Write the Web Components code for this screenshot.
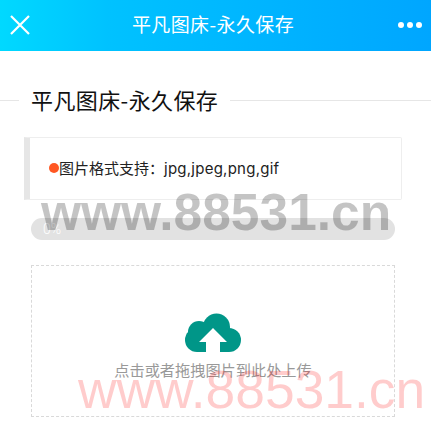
<!DOCTYPE html>
<html lang="zh">
<head>
<meta charset="utf-8">
<title>平凡图床-永久保存</title>
<style>
    html, body {
        margin: 0;
        height: 423px;
        overflow: hidden;
        background: #fff;
        font-family: "Liberation Sans", "Noto Sans CJK SC", sans-serif;
    }
</style>
</head>
<body>
<app-shell>
    <top-bar>平凡图床-永久保存</top-bar>
    <section-title>平凡图床-永久保存</section-title>
    <note-box>图片格式支持：<span style="letter-spacing:.25px">jpg,jpeg,png,gif</span></note-box>
    <progress-bar value="0"></progress-bar>
    <upload-zone>点击或者拖拽图片到此处上传</upload-zone>
    <water-mark kind="gray">www.88531.cn</water-mark>
    <water-mark kind="pink">www.88531.cn</water-mark>
</app-shell>

<script>
class AppShell extends HTMLElement {
    constructor() {
        super();
        this.attachShadow({mode: "open"}).innerHTML = `
        <style>
            :host { display: flex; flex-direction: column; position: relative; height: 423px; overflow: hidden; }
        </style>
        <slot></slot>`
    }
}

class TopBar extends HTMLElement {
    constructor() {
        super();
        this.attachShadow({mode: "open"}).innerHTML = `
        <style>
            :host {
                display: flex;
                align-items: center;
                justify-content: space-between;
                height: 51px;
                padding: 0 9px 2px 10px;
                box-sizing: border-box;
                background: linear-gradient(90deg, #00d9ff, #00c2ff 25%, #00a6ff);
                color: #fff;
                font: 19px "Noto Sans CJK SC", sans-serif;
            }
            svg { display: block; }
            span { margin: 0 2px 2px 0; letter-spacing: .4px; }
            .close { width: 20px; height: 20px; }
            .more { width: 24px; height: 6px; }
        </style>
        <svg class="close" viewBox="0 0 20 20"><path d="M1 1 L19 19 M19 1 L1 19" stroke="#fff" stroke-width="2.2" fill="none"/></svg>
        <span><slot></slot></span>
        <svg class="more" viewBox="0 0 24 6" fill="#fff"><circle cx="3" cy="3" r="3"/><circle cx="12" cy="3" r="3"/><circle cx="21" cy="3" r="3"/></svg>`
    }
}

class SectionTitle extends HTMLElement {
    constructor() {
        super();
        this.attachShadow({mode: "open"}).innerHTML = `
        <style>
            :host {
                display: flex;
                align-items: center;
                gap: 12px;
                margin-top: 33px;
                height: 32px;
                color: #111;
                font: 22px/32px "Noto Sans CJK SC", sans-serif;
                letter-spacing: .4px;
            }
            i { height: 1px; background: #e6e6e6; margin-top: 1px; }
            span { margin-bottom: 2px; }
            .left { width: 19px; }
            .right { flex: 1; }
        </style>
        <i class="left"></i><span><slot></slot></span><i class="right"></i>`
    }
}

class NoteBox extends HTMLElement {
    constructor() {
        super();
        this.attachShadow({mode: "open"}).innerHTML = `
        <style>
            :host {
                display: flex;
                align-items: center;
                box-sizing: border-box;
                width: 378px;
                height: 63px;
                margin: 21px 0 0 24px;
                padding: 0 0 2px 19px;
                border: 1px solid #eee;
                border-left: 6px solid #e6e6e6;
                border-radius: 0 2px 2px 0;
                color: #222;
                font: 15px "Inter", "Noto Sans CJK SC", sans-serif;
            }
            .dot { width: 10px; height: 10px; border-radius: 50%; background: #ff5722; }
        </style>
        <span class="dot"></span><span><slot></slot></span>`
    }
}

class ProgressBar extends HTMLElement {
    constructor() {
        super();
        this.attachShadow({mode: "open"}).innerHTML = `
        <style>
            :host {
                display: flex;
                align-items: center;
                box-sizing: border-box;
                width: 364px;
                height: 22px;
                margin: 18px 0 0 31px;
                padding-left: 12px;
                border-radius: 11px;
                background: #e2e2e2;
                color: #fff;
                font: 300 14px "Roboto", sans-serif;
            }
        </style>
        <span id="label"></span>`
        this.shadowRoot.getElementById('label').textContent = this.getAttribute('value') + '%'
    }
}

class UploadZone extends HTMLElement {
    constructor() {
        super();
        this.attachShadow({mode: "open"}).innerHTML = `
        <style>
            :host {
                display: flex;
                flex-direction: column;
                align-items: center;
                box-sizing: border-box;
                width: 364px;
                height: 152px;
                margin: 25px 0 0 31px;
                padding-top: 47px;
                border: 1px dashed #d9d9d9;
                color: #999;
                font: 15.2px/20px "Noto Sans CJK SC", sans-serif;
            }
            svg { display: block; width: 56px; height: 39px; margin-bottom: 7px; }
        </style>
        <svg viewBox="0 0 56 39">
            <g fill="#009688">
                <circle cx="12" cy="27" r="12"/>
                <circle cx="14" cy="19" r="11"/>
                <circle cx="31.5" cy="14" r="13.5"/>
                <circle cx="44" cy="27" r="12"/>
                <rect x="12" y="22" width="32" height="17"/>
            </g>
            <polygon fill="#fff" points="28,15 42,29 35,29 35,39 21,39 21,29 14,29"/>
        </svg>
        <slot></slot>`
    }
}

class WaterMark extends HTMLElement {
    constructor() {
        super();
        this.attachShadow({mode: "open"}).innerHTML = `
        <style>
            :host {
                position: absolute;
                white-space: nowrap;
                font-family: "Liberation Sans", sans-serif;
                pointer-events: none;
            }
            :host([kind="gray"]) {
                left: 41px;
                top: 182px;
                font-size: 51.5px;
                line-height: 60px;
                font-weight: bold;
                color: rgba(0, 0, 0, .23);
            }
            :host([kind="pink"]) {
                left: 78px;
                top: 360px;
                font-size: 53.4px;
                line-height: 60px;
                color: rgba(255, 0, 0, .2);
            }
        </style>
        <slot></slot>`
    }
}

customElements.define('app-shell', AppShell)
customElements.define('top-bar', TopBar)
customElements.define('section-title', SectionTitle)
customElements.define('note-box', NoteBox)
customElements.define('progress-bar', ProgressBar)
customElements.define('upload-zone', UploadZone)
customElements.define('water-mark', WaterMark)
</script>
</body>
</html>
